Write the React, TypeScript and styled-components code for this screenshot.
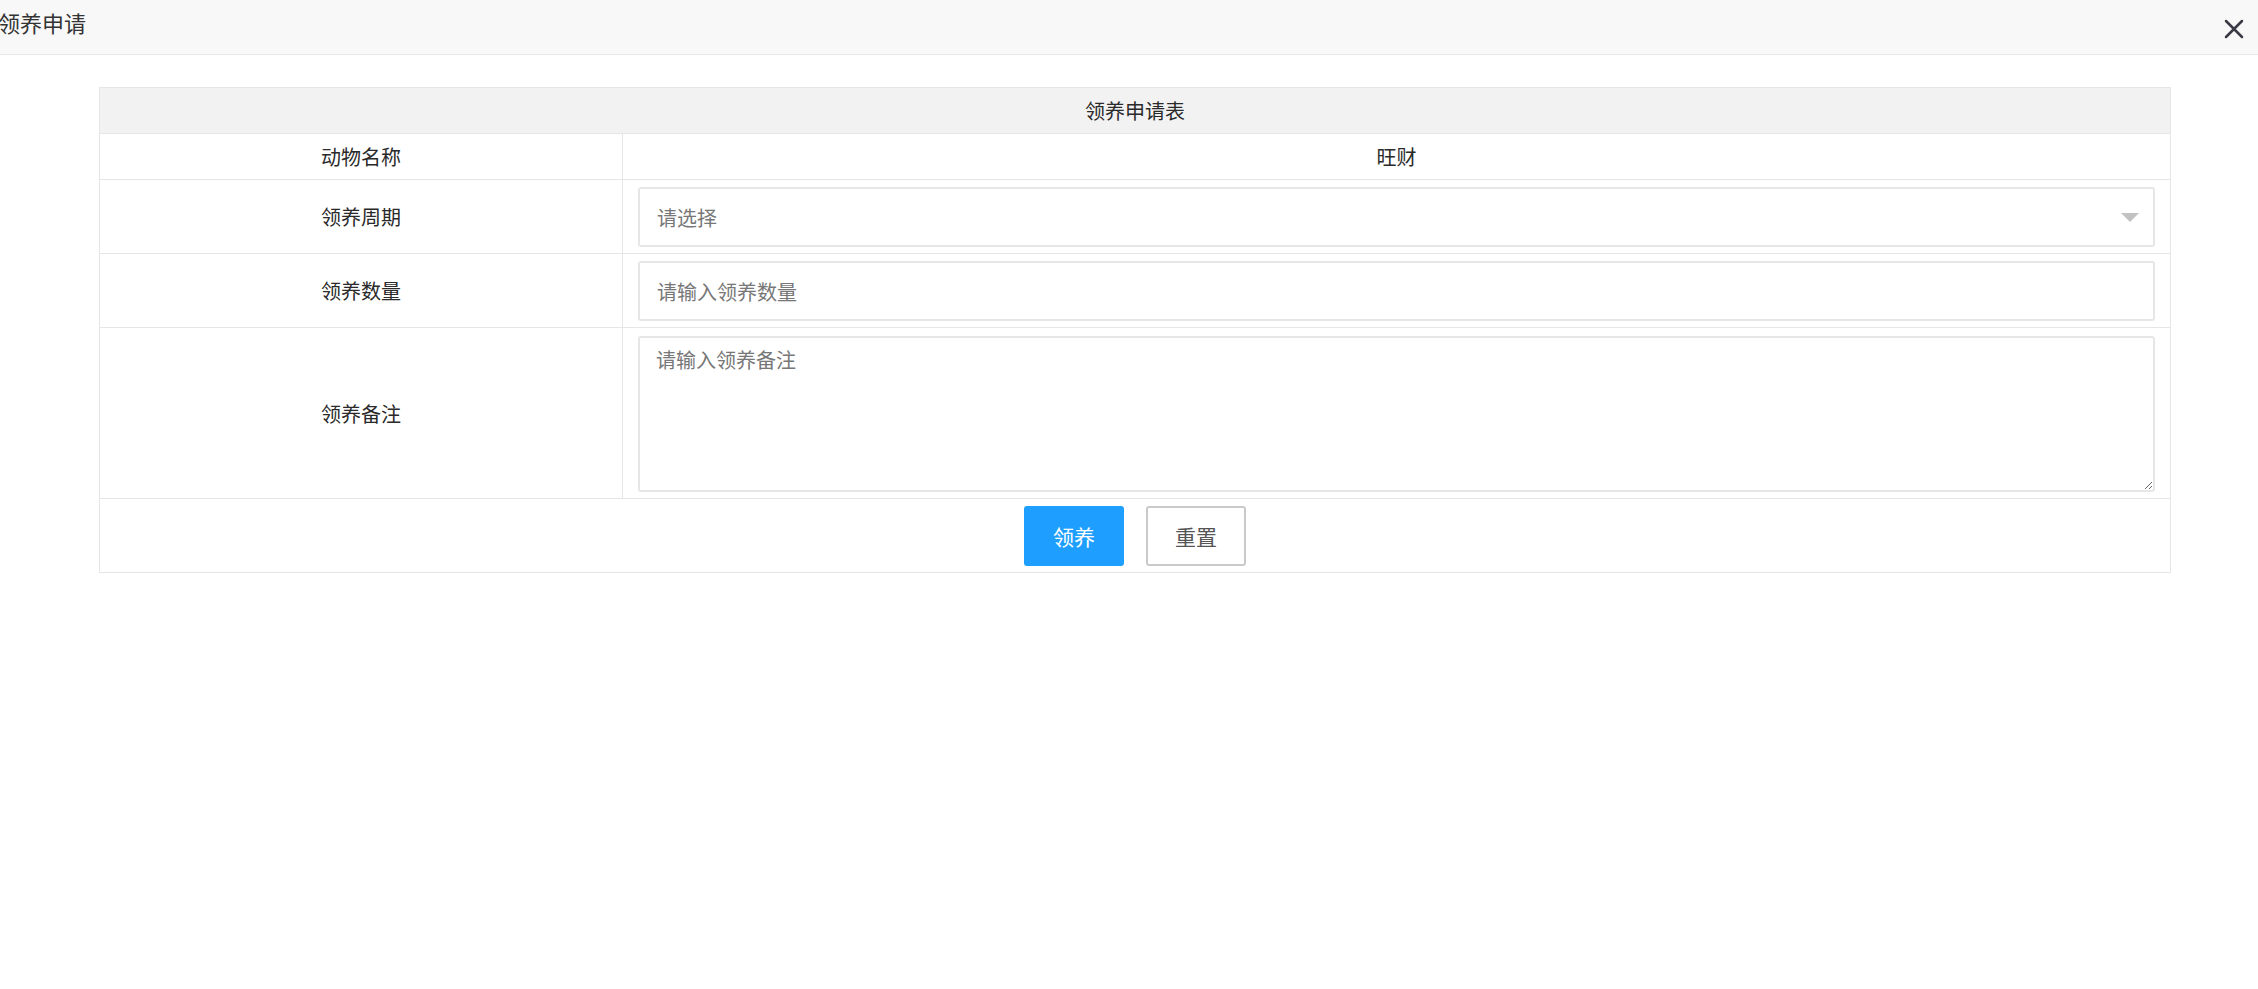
import styled, { createGlobalStyle } from "styled-components"

const GlobalStyle = createGlobalStyle`
  html, body {
    margin: 0;
    padding: 0;
    background: #fff;
    font-family: "Noto Sans CJK SC", "Noto Sans", sans-serif;
  }
  * {
    box-sizing: border-box;
  }
`

const App = () => {
  return (
    <Page>
      <GlobalStyle />
      <TitleBar>
        <Title>领养申请</Title>
        <CloseButton aria-label="关闭">
          <svg width="20" height="20" viewBox="0 0 20 20">
            <path
              d="M2 2 L18 18 M18 2 L2 18"
              stroke="#3a3a44"
              strokeWidth="2.5"
              strokeLinecap="round"
            />
          </svg>
        </CloseButton>
      </TitleBar>

      <Body>
        <FormTable>
          <colgroup>
            <col style={{ width: 523 }} />
            <col />
          </colgroup>
          <tbody>
            <tr>
              <HeadCell colSpan={2}>领养申请表</HeadCell>
            </tr>
            <tr>
              <TextCell>动物名称</TextCell>
              <TextCell>旺财</TextCell>
            </tr>
            <tr>
              <TextCell>领养周期</TextCell>
              <FieldCell>
                <SelectBox>
                  <Placeholder>请选择</Placeholder>
                  <Caret />
                </SelectBox>
              </FieldCell>
            </tr>
            <tr>
              <TextCell>领养数量</TextCell>
              <FieldCell>
                <Input placeholder="请输入领养数量" />
              </FieldCell>
            </tr>
            <tr>
              <TextCell>领养备注</TextCell>
              <FieldCell>
                <TextArea placeholder="请输入领养备注" />
              </FieldCell>
            </tr>
            <tr>
              <FieldCell colSpan={2}>
                <ButtonRow>
                  <Button $primary>领养</Button>
                  <Button>重置</Button>
                </ButtonRow>
              </FieldCell>
            </tr>
          </tbody>
        </FormTable>
      </Body>
    </Page>
  )
}

export default App

const Page = styled.div`
  width: 2258px;
  min-height: 989px;
  background: #fff;
`

const TitleBar = styled.div`
  height: 55px;
  background: #f8f8f8;
  border-bottom: 1px solid #e9e9e9;
  display: flex;
  align-items: flex-start;
  justify-content: space-between;
  padding-right: 14px;
`

const Title = styled.div`
  font-size: 22px;
  line-height: 44px;
  color: #333;
  margin-left: -2px;
`

const CloseButton = styled.div`
  width: 20px;
  height: 20px;
  margin-top: 19px;
  display: flex;
  cursor: pointer;
`

const Body = styled.div`
  padding: 32px 0 0 99px;
`

const FormTable = styled.table`
  width: 2072px;
  border-collapse: collapse;
  table-layout: fixed;
  font-size: 20px;
  color: #2a2a2a;

  td {
    border: 1px solid #e6e6e6;
  }
`

const HeadCell = styled.td`
  background: #f2f2f2;
  text-align: center;
  line-height: 29px;
  padding: 8px 15px;
`

const TextCell = styled.td`
  text-align: center;
  line-height: 29px;
  padding: 8px 15px;
`

const FieldCell = styled.td`
  padding: 7px 15px 6px;
  vertical-align: middle;
`

const fieldBase = `
  width: 100%;
  border: 2px solid #e6e6e6;
  border-radius: 3px;
  background: #fff;
  font-family: "Noto Sans CJK SC", "Noto Sans", sans-serif;
  font-size: 20px;
  color: #333;
  outline: none;
`

const SelectBox = styled.div`
  ${fieldBase}
  height: 60px;
  display: flex;
  align-items: center;
  justify-content: space-between;
  padding: 0 14px 0 17px;
`

const Placeholder = styled.span`
  color: #777;
`

const Caret = styled.span`
  width: 0;
  height: 0;
  border-left: 9px solid transparent;
  border-right: 9px solid transparent;
  border-top: 9px solid #c2c2c2;
`

const Input = styled.input`
  ${fieldBase}
  height: 60px;
  padding: 0 17px;

  &::placeholder {
    color: #777;
  }
`

const TextArea = styled.textarea`
  ${fieldBase}
  display: block;
  height: 156px;
  margin: 1px 0 0;
  padding: 8px 16px;
  line-height: 28px;
  resize: vertical;

  &::placeholder {
    color: #777;
  }
`

const ButtonRow = styled.div`
  display: flex;
  justify-content: center;
  gap: 22px;
`

const Button = styled.button<{ $primary?: boolean }>`
  width: 100px;
  height: 60px;
  border-radius: 3px;
  font-family: "Noto Sans CJK SC", "Noto Sans", sans-serif;
  font-size: 21px;
  cursor: pointer;
  border: ${({ $primary }) => ($primary ? "none" : "2px solid #cacaca")};
  background: ${({ $primary }) => ($primary ? "#1e9fff" : "#fff")};
  color: ${({ $primary }) => ($primary ? "#fff" : "#555")};
`
